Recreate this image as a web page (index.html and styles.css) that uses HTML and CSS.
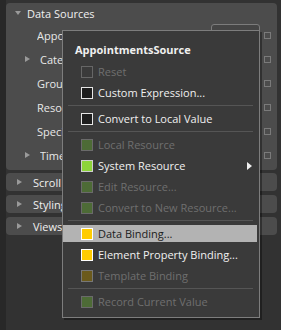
FILE: index.html
```html
<html lang="en">
<head>
    <meta charset="UTF-8">
    <title>Data Sources</title>
    <link rel="stylesheet" href="styles.css">
</head>
<body>
    <div class="shell">
        <div class="group open">
            <div class="group-head"><span class="tri down"></span>Data Sources</div>
            <div class="prop"><span class="name">AppointmentsSource</span><span class="field"></span><span class="mark"></span></div>
            <div class="prop sub"><span class="tri"></span><span class="name">Categories</span><span class="mark"></span></div>
            <div class="prop"><span class="name">GroupsSource</span><span class="mark"></span></div>
            <div class="prop"><span class="name">ResourcesSource</span><span class="mark"></span></div>
            <div class="prop"><span class="name">SpecialSlots</span><span class="mark"></span></div>
            <div class="prop sub"><span class="tri"></span><span class="name">Timelines</span><span class="mark"></span></div>
        </div>
        <div class="group"><div class="group-head"><span class="tri"></span>Scroll Info</div></div>
        <div class="group"><div class="group-head"><span class="tri"></span>Styling</div></div>
        <div class="group"><div class="group-head"><span class="tri"></span>Views</div></div>

        <div class="menu">
            <div class="menu-title">AppointmentsSource</div>
            <div class="item off"><span class="box off"></span>Reset</div>
            <div class="item"><span class="box"></span>Custom Expression...</div>
            <div class="sep"></div>
            <div class="item"><span class="box"></span>Convert to Local Value</div>
            <div class="sep"></div>
            <div class="item off"><span class="box green off"></span>Local Resource</div>
            <div class="item"><span class="box green"></span>System Resource<span class="arrow"></span></div>
            <div class="item off"><span class="box green off"></span>Edit Resource...</div>
            <div class="item off"><span class="box green off"></span>Convert to New Resource...</div>
            <div class="sep"></div>
            <div class="item hover"><span class="box yellow"></span>Data Binding...</div>
            <div class="item"><span class="box yellow"></span>Element Property Binding...</div>
            <div class="item off"><span class="box yellow off"></span>Template Binding</div>
            <div class="sep"></div>
            <div class="item off"><span class="box green off"></span>Record Current Value</div>
        </div>
    </div>
</body>
</html>
```
FILE: styles.css
```css
*{
    margin: 0;
    padding: 0;
}
body{
    background: #2f2f2f;
    font-family: "Open Sans", "Noto Sans", sans-serif;
    font-size: 11px;
    color: #e8e8e8;
}

.shell{
    position: relative;
    width: 281px;
    height: 330px;
    box-sizing: border-box;
    border-left: 6px solid #282828;
    padding: 3px 4px 0 0;
    background: #323232;
    overflow: hidden;
}

/* property groups */
.group{
    background: #4c4c4c;
    border-radius: 4px;
    height: 18px;
    margin-bottom: 4px;
}
.group.open{
    height: 167px;
    margin-bottom: 3px;
}
.group-head{
    height: 18px;
    display: flex;
    align-items: center;
    padding-left: 11px;
    white-space: nowrap;
    color: #f0f0f0;
}
.open .group-head{
    height: 20px;
    padding-left: 9px;
}
.tri{
    width: 0;
    height: 0;
    border-top: 3px solid transparent;
    border-bottom: 3px solid transparent;
    border-left: 5px solid #9a9a9a;
    margin-right: 11px;
}
.tri.down{
    border-left: 3px solid transparent;
    border-right: 3px solid transparent;
    border-top: 4px solid #9a9a9a;
    border-bottom: 0;
    margin-right: 6px;
}

.prop{
    height: 24px;
    display: flex;
    align-items: center;
    padding: 0 6px 0 31px;
}
.prop.sub{
    padding-left: 19px;
}
.prop.sub .tri{
    margin-right: 10px;
}
/* names run under the menu; clip them at its left edge */
.name{
    width: 25px;
    margin-right: auto;
    overflow: hidden;
    white-space: nowrap;
}
.sub .name{
    width: 23px;
}
.field{
    align-self: flex-start;
    margin: 1px 4px 0 0;
    width: 49px;
    height: 22px;
    box-sizing: border-box;
    border: 1px solid #7c7c7c;
    border-radius: 3px;
    background: #454545;
}
.mark{
    width: 7px;
    height: 7px;
    box-sizing: border-box;
    border: 1px solid #7a7a7a;
}

/* context menu */
.menu{
    position: absolute;
    left: 56px;
    top: 30px;
    width: 198px;
    box-sizing: border-box;
    display: flex;
    flex-direction: column;
    padding-bottom: 5px;
    background: #3a3a3a;
    border: 1px solid #7d7d7d;
    box-shadow: 2px 2px 0 rgba(0, 0, 0, 0.35);
    color: #f0f0f0;
}
.menu-title{
    height: 30px;
    box-sizing: border-box;
    padding: 10px 0 0 12px;
    line-height: 18px;
    font-weight: bold;
}
.item{
    height: 17px;
    margin: 2px 2px 2px 0;
    display: flex;
    align-items: center;
    gap: 5px;
    padding-left: 18px;
    white-space: nowrap;
}
.item.off{
    color: #6f6f6f;
}
.item.hover{
    background: #b3b3b3;
    color: #1c1c1c;
}
.sep{
    height: 5px;
    margin: 0 6px 0 5px;
    display: flex;
    align-items: center;
}
.sep::before{
    content: "";
    flex: 1;
    height: 1px;
    background: #555;
}
.arrow{
    margin-left: auto;
    margin-right: 5px;
    width: 0;
    height: 0;
    border-top: 4px solid transparent;
    border-bottom: 4px solid transparent;
    border-left: 5px solid #f0f0f0;
}

.box{
    width: 12px;
    height: 12px;
    box-sizing: border-box;
    border: 1px solid #e6e6e6;
    background: #1e1e1e;
    flex: none;
}
.box.off{
    border-color: #666;
    background: transparent;
}
.box.green{
    background: #8dd43a;
    border-color: #cfcfcf;
}
.box.green.off{
    background: #4d6b36;
    border-color: #6a6a6a;
}
.box.yellow{
    background: #ffcc00;
    border-color: #fff;
}
.box.yellow.off{
    background: #6b5a1c;
    border-color: #777;
}
```
